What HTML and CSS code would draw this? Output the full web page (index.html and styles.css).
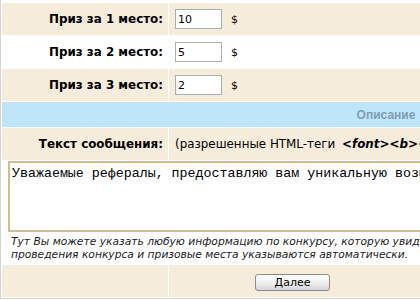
FILE: index.html
```html
<!DOCTYPE html>
<html lang="ru">
<head>
  <meta charset="UTF-8" />
  <title>Конкурс рефералов</title>
  <link rel="stylesheet" href="styles.css">
</head>
<body>
  <div class="frame">
    <table class="form">
      <tr class="odd">
        <td class="label">Приз за 1 место:</td>
        <td class="value"><input type="text" class="prize" value="10"/><span class="cur">$</span></td>
      </tr>
      <tr class="even">
        <td class="label">Приз за 2 место:</td>
        <td class="value"><input type="text" class="prize" value="5"/><span class="cur">$</span></td>
      </tr>
      <tr class="odd">
        <td class="label">Приз за 3 место:</td>
        <td class="value"><input type="text" class="prize" value="2"/><span class="cur">$</span></td>
      </tr>
      <tr>
        <td class="section" colspan="2">Описание</td>
      </tr>
      <tr class="odd">
        <td class="label">Текст сообщения:</td>
        <td class="value hint">(разрешенные HTML-теги <b><i>&lt;font&gt;&lt;b&gt;&lt;i&gt;&lt;u&gt;&lt;br&gt;</i></b>)</td>
      </tr>
      <tr class="even">
        <td class="body" colspan="2">
          <textarea class="message" spellcheck="false">Уважаемые рефералы, предоставляю вам уникальную возможность принять участие в конкурсе.</textarea>
          <p class="note">Тут Вы можете указать любую информацию по конкурсу, которую увидят ваши рефералы. Сроки<br>проведения конкурса и призовые места указываются автоматически.</p>
        </td>
      </tr>
      <tr class="odd">
        <td class="label"></td>
        <td class="value"><button class="next">Далее</button></td>
      </tr>
    </table>
  </div>
</body>
</html>
```

FILE: styles.css
```css
body {
  margin: 0;
  background: #fff;
  font-family: Tahoma, "DejaVu Sans", sans-serif;
  font-size: 11px;
  color: #000;
  overflow: hidden;
}
.frame {
  width: 780px;
  padding-top: 2px;
  border-left: 1px solid #d4d4d4;
  border-bottom: 1px solid #d4d4d4;
}
.form {
  width: 770px;
  border-spacing: 1px;
  background: #fff;
}
.form td {
  padding: 0;
  box-sizing: border-box;
}
.odd td {
  background: #f6ecdb;
}
.even td {
  background: #fff;
}
.label {
  width: 166px;
  height: 32px;
  padding-right: 5px !important;
  text-align: right;
  font-weight: bold;
  font-size: 11.9px;
  white-space: nowrap;
}
.value {
  padding-left: 6px !important;
  white-space: nowrap;
}
.prize {
  width: 47px;
  height: 20px;
  box-sizing: border-box;
  padding: 1px 2px;
  border: 1px solid #a9aeb3;
  font-family: Tahoma, "DejaVu Sans", sans-serif;
  font-size: 11px;
  vertical-align: middle;
}
.cur {
  margin-left: 9px;
  font-size: 11px;
  vertical-align: middle;
}
.section {
  height: 25px;
  background: #bfe6f8;
  text-align: center;
  font-family: "Liberation Sans", Arial, sans-serif;
  font-weight: bold;
  font-size: 12px;
  color: #7f9db3;
}
.hint {
  font-size: 11.9px;
  height: 30px !important;
}
.hint i {
  margin-left: 3px;
}
.body {
  padding: 0 0 3px 6px !important;
}
.message {
  display: block;
  width: 740px;
  height: 71px;
  box-sizing: border-box;
  margin: 0;
  padding: 3px 2px;
  border: 2px solid #d3bd8d;
  font-family: "Liberation Mono", monospace;
  font-size: 13.3px;
  resize: none;
}
.note {
  margin: 3px 0 0 3px;
  font-style: italic;
  font-size: 10.7px;
  line-height: 13px;
  color: #222;
}
.next {
  display: block;
  margin: 2px 0 0 80px;
  width: 75px;
  height: 17px;
  padding: 0;
  border: 1px solid #8c8c8c;
  border-radius: 3px;
  background: linear-gradient(#ffffff, #ececec 60%, #d6d6d6);
  font-family: Tahoma, "DejaVu Sans", sans-serif;
  font-size: 11px;
}
```
